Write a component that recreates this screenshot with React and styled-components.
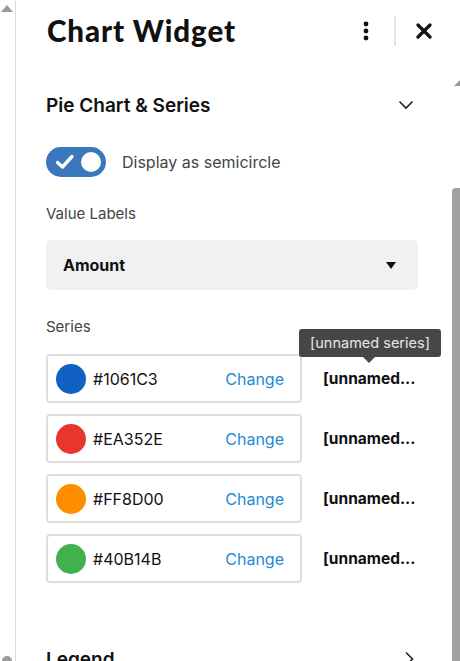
import React from "react";
import styled, { createGlobalStyle } from "styled-components";

const series = [
  { color: "#1061C3", label: "#1061C3" },
  { color: "#EA352E", label: "#EA352E" },
  { color: "#FF8D00", label: "#FF8D00" },
  { color: "#40B14B", label: "#40B14B" },
];

const App = () => {
  return (
    <>
      <GlobalStyle />
      <Page>
        <Gutter>
          <ArrowUp />
          <ArrowDown />
        </Gutter>
        <Panel>
          <Header>
            <Title>Chart Widget</Title>
            <Actions>
              <IconButton aria-label="More">
                <svg width="8" height="20" viewBox="0 0 8 20">
                  <circle cx="4" cy="3" r="2.4" fill="#111" />
                  <circle cx="4" cy="10" r="2.4" fill="#111" />
                  <circle cx="4" cy="17" r="2.4" fill="#111" />
                </svg>
              </IconButton>
              <Divider />
              <IconButton aria-label="Close">
                <svg width="16" height="16" viewBox="0 0 16 16">
                  <path d="M2 2 L14 14 M14 2 L2 14" stroke="#111" strokeWidth="3.2" strokeLinecap="round" />
                </svg>
              </IconButton>
            </Actions>
          </Header>
          <Body>
            <Content>
              <SectionHead>
                <SectionTitle>Pie Chart &amp; Series</SectionTitle>
                <svg width="16" height="10" viewBox="0 0 16 10">
                  <path d="M1.5 1.5 L8 8 L14.5 1.5" stroke="#222" strokeWidth="1.6" fill="none" />
                </svg>
              </SectionHead>

              <ToggleRow>
                <Toggle>
                  <svg width="20" height="16" viewBox="0 0 20 16">
                    <path d="M2.5 8.5 L7.5 13 L17 2.5" stroke="#fff" strokeWidth="3.4" fill="none" strokeLinecap="round" strokeLinejoin="round" />
                  </svg>
                  <Knob />
                </Toggle>
                <ToggleLabel>Display as semicircle</ToggleLabel>
              </ToggleRow>

              <FieldLabel>Value Labels</FieldLabel>
              <Select>
                <span>Amount</span>
                <Caret />
              </Select>

              <FieldLabel>Series</FieldLabel>
              <SeriesList>
                {series.map((s, i) => (
                  <SeriesRow key={s.label}>
                    <ColorBox>
                      <Swatch $color={s.color} />
                      <Hex>{s.label}</Hex>
                      <ChangeLink>Change</ChangeLink>
                    </ColorBox>
                    <NameCell>
                      {i === 0 && <Tooltip>[unnamed series]</Tooltip>}
                      <Name>[unnamed...</Name>
                    </NameCell>
                  </SeriesRow>
                ))}
              </SeriesList>

              <SectionHead $collapsed>
                <SectionTitle>Legend</SectionTitle>
                <svg width="10" height="16" viewBox="0 0 10 16">
                  <path d="M2 1.5 L8.5 8 L2 14.5" stroke="#222" strokeWidth="1.6" fill="none" />
                </svg>
              </SectionHead>
            </Content>
            <Scrollbar>
              <ScrollArrow />
              <Thumb />
            </Scrollbar>
          </Body>
        </Panel>
      </Page>
    </>
  );
};

export default App;

const GlobalStyle = createGlobalStyle`
  body {
    margin: 0;
    background: #fff;
    font-family: Inter, "Open Sans", sans-serif;
    color: #111;
  }
`;

const Page = styled.div`
  display: flex;
  width: 460px;
  height: 661px;
  overflow: hidden;
  background: #fff;
`;

const Gutter = styled.div`
  width: 16px;
  flex-shrink: 0;
  border-right: 1px solid #dcdcdc;
  display: flex;
  flex-direction: column;
  justify-content: space-between;
  align-items: center;
  padding: 5px 0 0;
  box-sizing: border-box;
`;

const ArrowUp = styled.div`
  width: 0;
  height: 0;
  border-left: 6px solid transparent;
  border-right: 6px solid transparent;
  border-bottom: 7px solid #9a9a9a;
  margin-right: 2px;
`;

const ArrowDown = styled.div`
  width: 10px;
  height: 5px;
  border-radius: 5px 5px 0 0;
  background: #9a9a9a;
  margin-right: 2px;
`;

const Panel = styled.div`
  flex: 1;
  display: flex;
  flex-direction: column;
  min-width: 0;
`;

const Header = styled.div`
  height: 75px;
  flex-shrink: 0;
  display: flex;
  align-items: flex-start;
  justify-content: space-between;
  padding: 13px 24px 0 31px;
  box-sizing: border-box;
`;

const Title = styled.h1`
  margin: 0;
  font-family: Lato, Inter, sans-serif;
  font-weight: 900;
  font-size: 29.5px;
  line-height: 36px;
  letter-spacing: 0.9px;
  color: #111;
`;

const Actions = styled.div`
  display: flex;
  align-items: center;
  height: 36px;
`;

const IconButton = styled.div`
  display: flex;
  align-items: center;
  justify-content: center;
  width: 24px;
  height: 24px;
  &:first-child {
    margin-right: 16px;
  }
  &:last-child {
    margin-left: 16px;
  }
`;

const Divider = styled.div`
  width: 2px;
  height: 30px;
  background: #e2e2e2;
`;

const Body = styled.div`
  flex: 1;
  display: flex;
  min-height: 0;
  overflow: hidden;
`;

const Content = styled.div`
  flex: 1;
  padding: 0 34px 0 30px;
  display: flex;
  flex-direction: column;
  min-height: 0;
  & > * {
    flex-shrink: 0;
  }
`;

const SectionHead = styled.div`
  display: flex;
  align-items: center;
  justify-content: space-between;
  height: 60px;
  padding-right: 4px;
  margin-top: ${(p) => (p.$collapsed ? "46px" : "0")};
`;

const SectionTitle = styled.h2`
  margin: 0;
  font-size: 19px;
  font-weight: 600;
  color: #111;
`;

const ToggleRow = styled.div`
  display: flex;
  align-items: center;
  margin-top: 12px;
  gap: 16px;
`;

const Toggle = styled.div`
  width: 60px;
  height: 30px;
  border-radius: 15px;
  background: #3a77bd;
  display: flex;
  align-items: center;
  justify-content: space-between;
  padding: 0 5px 0 9px;
  box-sizing: border-box;
`;

const Knob = styled.div`
  width: 20px;
  height: 20px;
  border-radius: 50%;
  background: #fff;
`;

const ToggleLabel = styled.span`
  font-size: 16px;
  color: #444;
`;

const FieldLabel = styled.div`
  font-size: 15px;
  line-height: 20px;
  color: #444;
  margin-top: 27px;
`;

const Select = styled.div`
  margin-top: 16px;
  height: 50px;
  background: #f1f1f1;
  border-radius: 5px;
  display: flex;
  align-items: center;
  justify-content: space-between;
  padding: 0 22px 0 17px;
  font-size: 16px;
  font-weight: 700;
  color: #111;
`;

const Caret = styled.div`
  width: 0;
  height: 0;
  border-left: 5px solid transparent;
  border-right: 5px solid transparent;
  border-top: 7px solid #111;
`;

const SeriesList = styled.div`
  margin-top: 17px;
  display: flex;
  flex-direction: column;
  gap: 11px;
`;

const SeriesRow = styled.div`
  display: flex;
  align-items: center;
  gap: 21px;
`;

const ColorBox = styled.div`
  width: 256px;
  height: 49px;
  box-sizing: border-box;
  border: 2px solid #dedede;
  border-radius: 4px;
  display: flex;
  align-items: center;
  padding: 0 16px 0 8px;
`;

const Swatch = styled.div`
  width: 30px;
  height: 30px;
  border-radius: 50%;
  background: ${(p) => p.$color};
`;

const Hex = styled.span`
  margin-left: 7px;
  font-size: 16px;
  color: #111;
  flex: 1;
`;

const ChangeLink = styled.span`
  font-size: 16px;
  color: #1f8ad2;
`;

const NameCell = styled.div`
  position: relative;
  display: flex;
  align-items: center;
`;

const Name = styled.span`
  font-size: 15.5px;
  font-weight: 700;
  color: #111;
`;

const Tooltip = styled.div`
  position: absolute;
  bottom: calc(100% + 12px);
  left: -24px;
  white-space: nowrap;
  background: #464646;
  color: #e6e6e6;
  font-size: 14.5px;
  line-height: 28px;
  padding: 0 11px;
  border-radius: 3px;
  &::after {
    content: "";
    position: absolute;
    top: 100%;
    left: 64px;
    border-left: 6px solid transparent;
    border-right: 6px solid transparent;
    border-top: 6px solid #464646;
  }
`;

const Scrollbar = styled.div`
  width: 8px;
  flex-shrink: 0;
  display: flex;
  flex-direction: column;
  align-items: flex-end;
  padding-top: 5px;
`;

const ScrollArrow = styled.div`
  width: 0;
  height: 0;
  border-left: 6px solid transparent;
  border-bottom: 6px solid #9a9a9a;
`;

const Thumb = styled.div`
  margin-top: 102px;
  width: 8px;
  flex: 1;
  background: #a0a0a0;
  border-radius: 4px 0 0 0;
`;
